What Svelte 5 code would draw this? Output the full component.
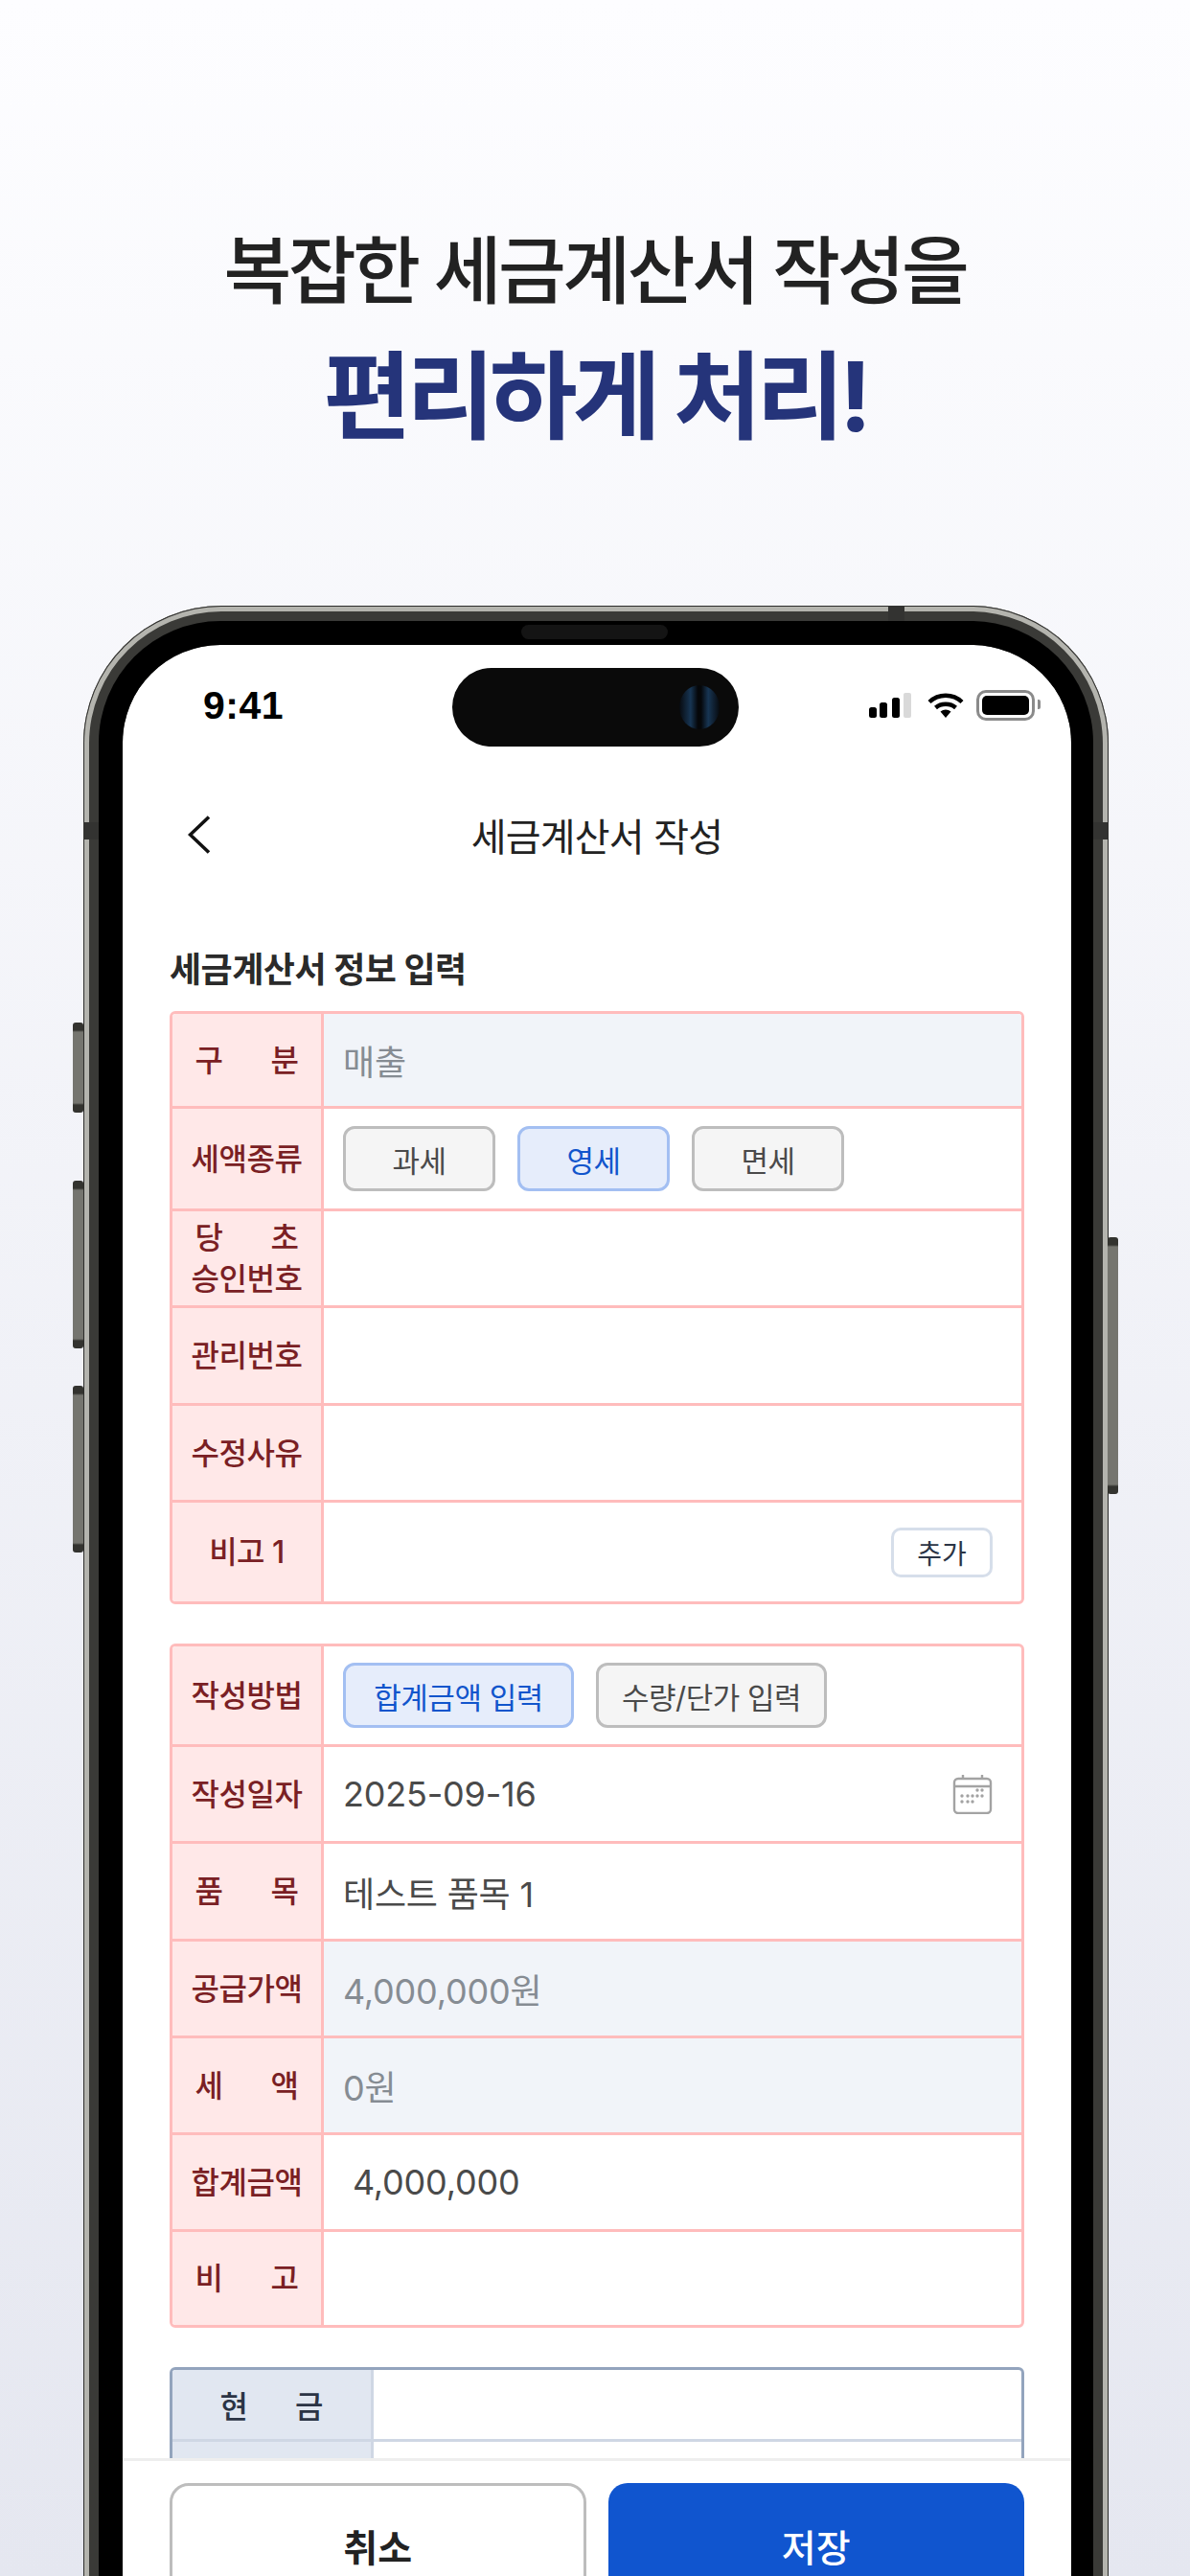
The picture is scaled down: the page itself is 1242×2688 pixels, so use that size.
<script>
  // tax invoice form, shown inside a phone mockup
  const infoRows = [
    { label: '구 분', h: 99, value: '매출', readonly: true },
    { label: '세액종류', h: 107, chips: [{ text: '과세' }, { text: '영세', on: true }, { text: '면세' }], wide: false },
    { label: '당 초', label2: '승인번호', h: 101 },
    { label: '관리번호', h: 102 },
    { label: '수정사유', h: 101 },
    { label: '비고 1', plain: true, h: 103, add: true }
  ];

  const itemRows = [
    { label: '작성방법', plain: true, h: 105, chips: [{ text: '합계금액 입력', on: true }, { text: '수량/단가 입력' }], wide: true },
    { label: '작성일자', plain: true, h: 101, value: '2025-09-16', calendar: true },
    { label: '품 목', h: 102, value: '테스트 품목 1' },
    { label: '공급가액', plain: true, h: 101, value: '4,000,000원', readonly: true },
    { label: '세 액', h: 101, value: '0원', readonly: true },
    { label: '합계금액', plain: true, h: 101, value: '4,000,000', indent: true },
    { label: '비 고', h: 97 }
  ];

  const calendarDots = [
    [26, 17], [31, 17],
    [10, 23], [16, 23], [21, 23], [26, 23], [31, 23],
    [10, 29], [16, 29], [21, 29]
  ];
</script>

{#snippet tableRow(row)}
  <div class="row" style="height: {row.h}px">
    <div class="label">
      <span class:justify={!row.plain && row.label.includes(' ')}>{row.label}</span>
      {#if row.label2}<span>{row.label2}</span>{/if}
    </div>
    <div class="cell" class:readonly={row.readonly} class:indent={row.indent}>
      {#if row.chips}
        <div class="chips">
          {#each row.chips as chip}
            <button class="chip" class:on={chip.on} class:wide={row.wide}>{chip.text}</button>
          {/each}
        </div>
      {:else if row.value}
        <span>{row.value}</span>
      {/if}
      {#if row.add}
        <button class="add">추가</button>
      {/if}
      {#if row.calendar}
        <svg class="calendar" width="42" height="42" viewBox="0 0 42 42" fill="none" stroke="#a3a3a3" stroke-width="2.4">
          <rect x="2" y="5" width="38" height="36" rx="4" />
          <path d="M2 13h38" />
          <path d="M11 1v5M31 1v5" />
          {#each calendarDots as [x, y]}
            <circle cx={x} cy={y} r="1.7" fill="#a3a3a3" stroke="none" />
          {/each}
        </svg>
      {/if}
    </div>
  </div>
{/snippet}

<div class="page">
  <header class="hero">
    <h1>복잡한 세금계산서 작성을</h1>
    <h2>편리하게 처리!</h2>
  </header>

  <div class="phone">
    <i class="side vol-a"></i>
    <i class="side vol-b"></i>
    <i class="side vol-c"></i>
    <i class="side power"></i>
    <i class="band band-top"></i>
    <i class="band band-left"></i>
    <i class="band band-right"></i>
    <i class="speaker"></i>

    <div class="screen">
      <div class="island"><i class="lens"></i></div>

      <div class="status">
        <span class="time">9:41</span>
        <div class="status-icons">
          <svg width="44" height="26" viewBox="0 0 44 26">
            <rect x="0" y="15" width="8" height="11" rx="2.5" />
            <rect x="11" y="10" width="8" height="16" rx="2.5" />
            <rect x="24" y="5" width="8" height="21" rx="2.5" />
            <rect x="36" y="0" width="8" height="26" rx="2" fill="#d9d9d9" />
          </svg>
          <svg class="wifi" width="38" height="26" viewBox="0 0 38 26" fill="none" stroke="#000" stroke-width="4.4">
            <path d="M2 9.5C11.5 .5 26.5 .5 36 9.5" />
            <path d="M8.5 15.5C14 10.5 24 10.5 29.5 15.5" />
            <path d="M13.5 19.5L19 26L24.5 19.5C21 16.8 17 16.8 13.5 19.5Z" fill="#000" stroke="none" />
          </svg>
          <div class="battery"><i></i></div>
        </div>
      </div>

      <nav class="nav">
        <svg class="back" width="24" height="40" viewBox="0 0 24 40" fill="none" stroke="#111" stroke-width="3.6">
          <path d="M22 1.5L2.5 20L22 38.5" />
        </svg>
        <span>세금계산서 작성</span>
      </nav>

      <main class="content">
        <h3>세금계산서 정보 입력</h3>

        <section class="table">
          {#each infoRows as row}
            {@render tableRow(row)}
          {/each}
        </section>

        <section class="table">
          {#each itemRows as row}
            {@render tableRow(row)}
          {/each}
        </section>

        <section class="table pay">
          <div class="pay-row">
            <div class="pay-label"><span class="justify">현 금</span></div>
            <div></div>
          </div>
          <div class="pay-row">
            <div class="pay-label"></div>
            <div></div>
          </div>
        </section>
      </main>

      <footer class="actions">
        <button class="cancel">취소</button>
        <button class="save">저장</button>
      </footer>
    </div>
  </div>
</div>

<style>
  :global(body) {
    margin: 0;
    background: #e6e8f1;
  }

  .page {
    height: 2688px;
    overflow: hidden;
    background: linear-gradient(180deg, #fdfdff 0%, #e5e7f0 100%);
    font-family: Inter, "Noto Sans CJK KR", sans-serif;
    color: #222;
  }

  button {
    font-family: inherit;
    padding: 0;
    box-sizing: border-box;
  }

  .hero {
    height: 632px;
    box-sizing: border-box;
    padding-top: 233px;
    text-align: center;
  }

  .hero h1 {
    margin: 0;
    font-size: 77px;
    line-height: 100px;
    font-weight: 500;
    letter-spacing: -3.5px;
    color: #222;
  }

  .hero h2 {
    margin: 21px 0 0;
    font-size: 100px;
    line-height: 120px;
    font-weight: 700;
    letter-spacing: -5.3px;
    color: #25347a;
  }

  .phone {
    position: relative;
    box-sizing: border-box;
    width: 1070px;
    height: 2400px;
    margin-left: 87px;
    border-radius: 144px;
    padding: 16px;
    background: #3a3a37;
    box-shadow: inset 0 0 0 1px #2c2c2a, inset 0 0 0 6px #b4b4ae;
  }

  .side {
    position: absolute;
    width: 11px;
    border-radius: 3px;
    background: linear-gradient(180deg, #33332f 0, #33332f 8px, #75756f 10px, #75756f calc(100% - 10px), #33332f calc(100% - 8px));
  }

  .vol-a { left: -11px; top: 435px; height: 94px; }
  .vol-b { left: -11px; top: 600px; height: 175px; }
  .vol-c { left: -11px; top: 814px; height: 174px; }
  .power { right: -10px; top: 659px; height: 268px; }

  .band {
    position: absolute;
    background: #333331;
  }

  .band-top { left: 840px; top: 0; width: 17px; height: 16px; }
  .band-left { left: 0; top: 226px; width: 16px; height: 18px; }
  .band-right { right: 0; top: 226px; width: 16px; height: 18px; }

  .speaker {
    position: absolute;
    left: 457px;
    top: 20px;
    width: 153px;
    height: 15px;
    border-radius: 8px;
    background: #141414;
    z-index: 2;
  }

  .screen {
    position: relative;
    height: 2087px;
    box-sizing: border-box;
    background: #fff;
    border: solid #000;
    border-width: 25px 23px 0 25px;
    border-radius: 127px 127px 0 0;
    display: flex;
    flex-direction: column;
    overflow: hidden;
    background-clip: padding-box;
  }

  .island {
    position: absolute;
    left: 344px;
    top: 24px;
    width: 299px;
    height: 82px;
    border-radius: 41px;
    background: #0a0a0a;
    z-index: 2;
  }

  .lens {
    position: absolute;
    right: 20px;
    top: 18px;
    width: 42px;
    height: 46px;
    border-radius: 50%;
    background: linear-gradient(90deg, #070a0f 0, #173553 28%, #05070a 46%, #05070a 54%, #173553 72%, #070a0f 100%);
  }

  .status {
    flex: none;
    height: 126px;
    padding: 0 38px 0 84px;
    display: flex;
    align-items: center;
    justify-content: space-between;
  }

  .time {
    font-family: "Liberation Sans", sans-serif;
    font-size: 41px;
    font-weight: 700;
    color: #000;
    letter-spacing: 0.5px;
  }

  .status-icons {
    display: flex;
    align-items: center;
    gap: 17px;
  }

  .status-icons .wifi {
    margin-right: -4px;
  }

  .battery {
    position: relative;
    box-sizing: border-box;
    width: 61px;
    height: 32px;
    border: 3px solid #8a8a8a;
    border-radius: 10px;
    padding: 3px;
  }

  .battery i {
    display: block;
    height: 100%;
    border-radius: 5px;
    background: #000;
  }

  .battery::after {
    content: '';
    position: absolute;
    right: -9px;
    top: 7px;
    width: 3px;
    height: 10px;
    border-radius: 0 2px 2px 0;
    background: #8a8a8a;
  }

  .nav {
    position: relative;
    flex: none;
    height: 144px;
    display: flex;
    align-items: center;
    justify-content: center;
    font-size: 40px;
    letter-spacing: -0.8px;
    color: #222;
  }

  .back {
    position: absolute;
    left: 68px;
    top: 52px;
  }

  .content {
    flex: 1;
    min-height: 0;
    overflow: hidden;
    padding: 47px 49px 0;
  }

  h3 {
    margin: 0 0 21px;
    font-size: 36px;
    line-height: 44px;
    font-weight: 700;
    letter-spacing: -0.5px;
    color: #2a2a2a;
  }

  .table {
    border: 3px solid #ffbcbc;
    border-radius: 6px;
    overflow: hidden;
    margin-bottom: 41px;
  }

  .row {
    box-sizing: border-box;
    display: grid;
    grid-template-columns: 158px 1fr;
    border-bottom: 3px solid #ffbcbc;
  }

  .row:last-child {
    border-bottom: 0;
  }

  .label {
    box-sizing: border-box;
    background: #ffe8e8;
    border-right: 3px solid #ffbcbc;
    display: flex;
    flex-direction: column;
    align-items: center;
    justify-content: center;
    font-size: 32px;
    line-height: 43px;
    font-weight: 500;
    letter-spacing: -0.5px;
    color: #7a1f24;
  }

  .justify {
    display: block;
    width: 108px;
    text-align: justify;
    text-align-last: justify;
  }

  .cell {
    min-width: 0;
    display: flex;
    align-items: center;
    padding: 0 30px 0 20px;
    font-size: 36px;
    letter-spacing: -0.2px;
    color: #4a4a4a;
  }

  .cell.readonly {
    background: #f1f4f9;
    color: #868c93;
  }

  .cell.indent {
    padding-left: 30px;
  }

  .chips {
    display: flex;
    gap: 23px;
  }

  .chip {
    width: 159px;
    height: 68px;
    border: 3px solid #bdbdbd;
    border-radius: 12px;
    background: #f5f5f5;
    font-size: 31px;
    letter-spacing: -0.5px;
    color: #4a4a4a;
  }

  .chip.wide {
    width: 241px;
  }

  .chip.on {
    border-color: #a3bff2;
    background: #e6edfb;
    color: #1155cc;
  }

  .add {
    width: 106px;
    height: 52px;
    margin-left: auto;
    border: 3px solid #d6deea;
    border-radius: 10px;
    background: #fff;
    font-size: 28px;
    color: #2b3445;
  }

  .calendar {
    margin-left: auto;
  }

  .pay {
    border-color: #93a4bd;
    margin-bottom: 0;
  }

  .pay-row {
    display: grid;
    grid-template-columns: 210px 1fr;
    height: 75px;
    box-sizing: border-box;
    border-bottom: 3px solid #cfd7e4;
  }

  .pay-label {
    box-sizing: border-box;
    background: #e1e7f1;
    border-right: 3px solid #cfd7e4;
    display: flex;
    align-items: center;
    justify-content: center;
    font-size: 32px;
    font-weight: 500;
    color: #2b3445;
  }

  .actions {
    flex: none;
    height: 170px;
    box-sizing: border-box;
    display: grid;
    grid-template-columns: 1fr 1fr;
    gap: 23px;
    padding: 23px 49px 0;
    border-top: 3px solid #eeeeee;
    background: #fff;
  }

  .actions button {
    height: 130px;
    border-radius: 20px;
    font-size: 39px;
    font-weight: 700;
  }

  .cancel {
    border: 3px solid #bdbdbd;
    background: #fff;
    color: #222;
  }

  .save {
    border: 0;
    background: #1055cf;
    color: #fff;
  }

  .actions .save {
    font-weight: 500;
  }
</style>
